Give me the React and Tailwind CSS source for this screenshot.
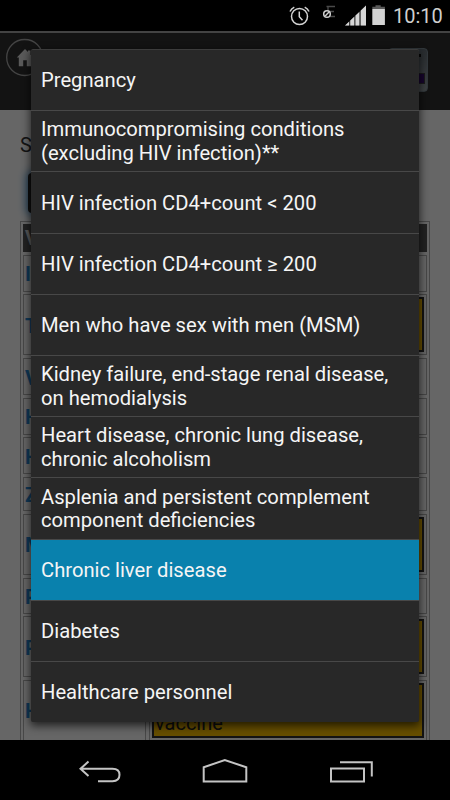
import React, { useState } from "react";
import clsx from "clsx";

const OPTIONS = [
  ["Pregnancy"],
  ["Immunocompromising conditions", "(excluding HIV infection)**"],
  ["HIV infection CD4+count < 200"],
  ["HIV infection CD4+count ≥ 200"],
  ["Men who have sex with men (MSM)"],
  ["Kidney failure, end-stage renal disease,", "on hemodialysis"],
  ["Heart disease, chronic lung disease,", "chronic alcoholism"],
  ["Asplenia and persistent complement", "component deficiencies"],
  ["Chronic liver disease"],
  ["Diabetes"],
  ["Healthcare personnel"],
];

const VACCINES = [
  { name: "I", height: "h-[37px]" },
  { name: "T", height: "h-[61px]", note: " " },
  { name: "V", height: "h-[37px]" },
  { name: "H", height: "h-[37px]" },
  { name: "H", height: "h-[37px]" },
  { name: "Z", height: "h-[34px]" },
  { name: "M", height: "h-[61px]", note: " " },
  { name: "P", height: "h-[36px]" },
  { name: "P", height: "h-[61px]", note: " " },
  { name: "H", height: "h-[61px]", note: "vaccine" },
];

const StatusBar = () => (
  <div className="relative z-10 h-[31px] shrink-0 bg-black">
    <svg className="h-[31px] w-[450px]" viewBox="0 0 450 31" fill="none">
      {/* alarm */}
      <g stroke="#d4d4d4" strokeWidth="1.5">
        <circle cx="299.5" cy="16.5" r="8" />
        <path d="M299.3 11.5v5.2l3.2 3.6" />
        <path d="M290 11.5q1.3-3 4.3-4.4M309 11.5q-1.3-3-4.3-4.4" />
      </g>
      {/* muted network */}
      <path d="M326.5 6.5h8.5M328 6v5M328 11.5h6M330 16.5h5" stroke="#4a4a4a" strokeWidth="1.3" />
      <circle cx="327" cy="14" r="3.3" stroke="#d0d0d0" strokeWidth="1.5" />
      <path d="M325 16.2l4-4.2" stroke="#d0d0d0" strokeWidth="1.4" />
      {/* signal */}
      <path d="M345 25.5L366 5.5V25.5z" fill="#d6d6d6" fillOpacity=".3" />
      <path d="M345 25.5L349 21.7V25.5zM350.3 25.5V20.5L354.2 16.7V25.5zM355.5 25.5V15.5L359.3 11.9V25.5zM360.8 25.5V10.5L366 5.5V25.5z" fill="#d6d6d6" />
      {/* battery */}
      <path d="M372.3 9V6.8h3.2V5.3h5.2v1.5h4.2V9z" fill="#595959" />
      <path d="M372.3 9h12.6v16h-12.6z" fill="#d2d2d2" />
    </svg>
    <span className="absolute top-[4px] left-[393px] text-[20px] leading-6 text-[#cfcfcf]">10:10</span>
  </div>
);

const Header = () => (
  <div className="flex h-[79px] shrink-0 justify-between border-t-2 border-[#a8a8a8] bg-[#303030] pr-[22px] pl-[6px]">
    <svg className="mt-[5px] h-[40px] w-[40px]" viewBox="0 0 40 40">
      <circle cx="18.7" cy="19.5" r="18" fill="none" stroke="#aaa" strokeWidth="1.3" />
      <path d="M10.8 19.5L19 11l3 3v-1.6h2.5v4.3l3 2.8h-2.3v8.8h-4.4v-6h-3.6v6h-4.4v-8.8z" fill="#e0e0e0" />
    </svg>
    <div className="mt-[15px] flex h-[44px] w-[40px] flex-col items-end rounded-[4px] border border-[#7d8d96] bg-linear-to-b from-[#667078] to-[#9ba4aa] pt-[5px]">
      <div className="mr-[6px] h-[3px] w-[4px] bg-[#111]" />
      <div className="mt-[16px] mr-[2px] h-[11px] w-[30px] border border-[#444] bg-[#3b0d72]" />
    </div>
  </div>
);

const VaccineTable = () => (
  <div className="ml-5 flex w-[410px] flex-col gap-[2.7px] border border-[#b2b2b2] p-[2px]">
    <div className="h-[28px] bg-[#555] pl-[2px] text-[20px] leading-[29px] font-bold text-[#ddd]">V</div>
    {VACCINES.map((v, i) => (
      <div key={i} className={clsx("flex shrink-0 gap-[3px]", v.height)}>
        <div className="flex w-[123px] items-center border border-[#b2b2b2] pt-[2px] pl-[1px] text-[20px] font-bold text-[#2a8fdc]">
          {v.name}
        </div>
        <div className="flex-1 border border-[#b2b2b2] p-[2px]">
          {v.note && (
            <div className="flex h-full items-end border-2 border-[#303030] bg-[#ffc400] pl-[1px] text-[20px] leading-[25px] text-[#222]">
              {v.note}
            </div>
          )}
        </div>
      </div>
    ))}
  </div>
);

const NavBar = () => (
  <div className="relative z-10 h-[60px] shrink-0 bg-black">
    <svg className="h-[60px] w-[450px]" viewBox="0 0 450 60" fill="none" stroke="#c4c4c4" strokeWidth="2">
      <path d="M88.5 21.5L80.5 28.8L88.5 36M81 28.8H112.5C117 28.8 119.5 31 119.5 34.8C119.5 39 117 41.2 112.5 41.2H98" />
      <path d="M203.7 41.5V27.3L224.8 20L246.3 27.3V41.5z" />
      <path d="M331 28.5H364V41.5H331z" />
      <path d="M340 22.3H371.8V36.5" />
    </svg>
  </div>
);

const App = () => {
  const [selected, setSelected] = useState(8);

  return (
    <div className="relative flex h-[800px] w-[450px] flex-col overflow-hidden bg-black font-['Roboto',sans-serif]">
      <StatusBar />
      <div className="relative flex h-[709px] flex-col overflow-hidden bg-white">
        <Header />
        <div className="mt-[23px] ml-5 text-[20px] leading-6 text-[#333]">S</div>
        <div className="mt-[16px] mb-[8px] ml-[28px] h-[40px] w-[360px] shrink-0 rounded-[4px] bg-[#222] shadow-[0_0_9px_2px_#5b9fd6]" />
        <VaccineTable />
        <div className="absolute inset-0 bg-black/60" />
      </div>
      <NavBar />

      <ul className="absolute top-[49px] left-[31px] z-20 flex h-[673px] w-[388px] flex-col rounded-[2px] border-t border-[#3c3c3c] bg-[#282828] shadow-[0_3px_8px_1px_rgba(0,0,0,0.65)]">
        {OPTIONS.map((lines, i) => (
          <li
            key={lines[0]}
            onClick={() => setSelected(i)}
            className={clsx(
              "flex flex-1 cursor-pointer flex-col justify-center pt-[2px] pl-[10px] text-[20.2px] leading-[23.8px] whitespace-nowrap text-[#f5f5f5]",
              i === selected && "bg-[#0981ad]",
              i < OPTIONS.length - 1 && "border-b border-[#484848]"
            )}
          >
            {lines.map((line) => (
              <span key={line}>{line}</span>
            ))}
          </li>
        ))}
      </ul>
    </div>
  );
};

export default App;
